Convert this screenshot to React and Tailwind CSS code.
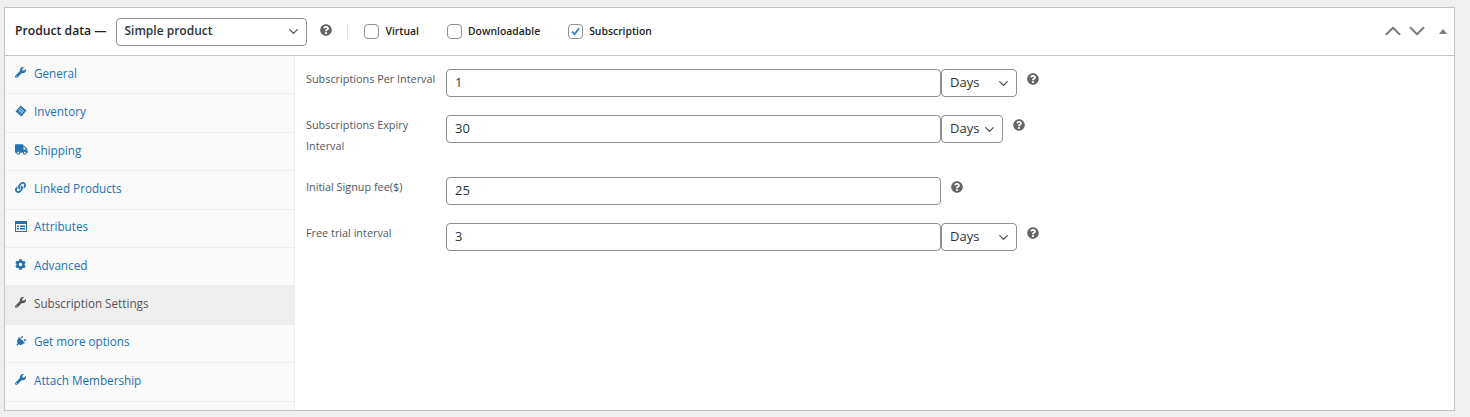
import React from "react";
import { FaCog, FaLink, FaPlug, FaQuestionCircle, FaTruck, FaWrench } from "react-icons/fa";
import { LuChevronDown, LuChevronUp } from "react-icons/lu";

const InventoryIcon = () => (
  <svg viewBox="0 0 12 12" className="w-[12px] h-[12px]" fill="currentColor">
    <path d="M5.5 0.5 L11.5 5.5 L6.5 11.5 L0.5 6.5 Z" />
    <path d="M3.2 4.2 L8 8.2 M4.6 2.8 L9.4 6.8 M3.6 7.6 L6.6 3.8 M5.4 9 L8.4 5.2" stroke="#dbe7f3" strokeWidth="0.7" fill="none" />
  </svg>
);

const AttributesIcon = () => (
  <svg viewBox="0 0 12 11" className="w-[12px] h-[11px]" fill="currentColor">
    <path d="M0.5 0 H11.5 A0.5 0.5 0 0 1 12 0.5 V10.5 A0.5 0.5 0 0 1 11.5 11 H0.5 A0.5 0.5 0 0 1 0 10.5 V0.5 A0.5 0.5 0 0 1 0.5 0 Z M1 3 V10 H11 V3 Z" fillRule="evenodd" />
    <path d="M2 4.5 H4 V6 H2 Z M5 4.5 H10 V6 H5 Z M2 7 H4 V8.5 H2 Z M5 7 H10 V8.5 H5 Z" />
  </svg>
);

const tabs = [
  { label: "General", icon: <FaWrench size={11} /> },
  { label: "Inventory", icon: <InventoryIcon /> },
  { label: "Shipping", icon: <FaTruck size={13} /> },
  { label: "Linked Products", icon: <FaLink size={11} /> },
  { label: "Attributes", icon: <AttributesIcon /> },
  { label: "Advanced", icon: <FaCog size={11} /> },
  { label: "Subscription Settings", icon: <FaWrench size={11} />, active: true },
  { label: "Get more options", icon: <FaPlug size={11} className="rotate-45" /> },
  { label: "Attach Membership", icon: <FaWrench size={11} /> },
];

const Help = () => <FaQuestionCircle size={12} className="text-[#666]" />;

const Select = ({ className, children }) => (
  <div className={`h-[28px] flex items-center justify-between border border-[#8c8f94] rounded bg-white text-[#2c3338] ${className}`}>
    <span className="pb-[1px]">{children}</span>
    <LuChevronDown size={15} strokeWidth={2.2} className="text-[#50575e] shrink-0" />
  </div>
);

const Check = ({ label, checked }) => (
  <div className="flex items-center gap-[6px]">
    <div className="w-[15px] h-[15px] border border-[#8c8f94] rounded-[4px] bg-white flex items-center justify-center">
      {checked && (
        <svg viewBox="0 0 12 12" className="w-[11px] h-[11px]">
          <path d="M2 6.2 L5 9 L10 2.5" stroke="#3582c4" strokeWidth="2" fill="none" />
        </svg>
      )}
    </div>
    <span className="text-[10.4px] font-semibold text-[#1d2327]">{label}</span>
  </div>
);

const FormRow = ({ label, value, unit, narrow, className }) => (
  <div className={`flex items-start ${className}`}>
    <label className="w-[140px] shrink-0 -mt-[1px] text-[10.85px] leading-[21px] text-[#50575e]">{label}</label>
    <div className="w-[495px] h-[28px] flex items-center px-[8px] pb-[1px] border border-[#8c8f94] rounded bg-white text-[13px] text-[#2c3338]">
      {value}
    </div>
    {unit && (
      <Select className={`text-[13px] pl-[8px] pr-[5px] ${narrow ? "w-[62px]" : "w-[76px]"}`}>{unit}</Select>
    )}
    <div className="mt-[4px] ml-[10px]">
      <Help />
    </div>
  </div>
);

export default function App() {
  return (
    <div className="h-[417px] bg-[#f0f0f1] pt-[7px] pl-[4px] pr-[15px] font-['Open_Sans',sans-serif]">
      <div className="h-[404px] border border-[#c3c4c7] bg-white flex flex-col overflow-hidden">
        <div className="h-[48px] shrink-0 border-b border-[#c3c4c7] flex items-center pl-[10px] pr-[3px]">
          <span className="text-[12.2px] font-semibold text-[#1d2327]">Product data —</span>
          <Select className="w-[191px] ml-[10px] pl-[7px] pr-[5px] text-[12px] font-semibold">Simple product</Select>
          <div className="ml-[13px] -mt-[3px]">
            <Help />
          </div>
          <div className="w-px h-[15px] bg-[#e0e0e0] ml-[15px] mr-[16px]" />
          <div className="flex items-center gap-[28px]">
            <Check label="Virtual" />
            <Check label="Downloadable" />
            <Check label="Subscription" checked />
          </div>
          <div className="ml-auto flex items-center text-[#787c82]">
            <LuChevronUp size={26} strokeWidth={1.8} className="-mr-[2px] -mt-[1px]" />
            <LuChevronDown size={26} strokeWidth={1.8} className="-mt-[1px]" />
            <div className="ml-[9px] mr-[4px] w-0 h-0 border-x-[4px] border-x-transparent border-b-[5px] border-b-[#787c82]" />
          </div>
        </div>
        <div className="flex flex-1 min-h-0">
          <div className="w-[290px] shrink-0 bg-[#fafafa] border-r border-[#eeeeee]">
            {tabs.map((tab) => (
              <div
                key={tab.label}
                className={`h-[38.4px] flex items-center pb-[2.4px] pl-[10px] border-b border-[#eeeeee] text-[11.7px] ${
                  tab.active ? "bg-[#eeeeee] text-[#555]" : "text-[#2271b1]"
                }`}
              >
                <span className="w-[19px] flex -mt-[2px]">{tab.icon}</span>
                {tab.label}
              </div>
            ))}
          </div>
          <div className="flex-1 pl-[11px] pt-[13px] flex flex-col">
            <FormRow label="Subscriptions Per Interval" value="1" unit="Days" className="mb-[18px]" />
            <FormRow label={<>Subscriptions Expiry<br />Interval</>} value="30" unit="Days" narrow className="h-[44px] mb-[18px]" />
            <FormRow label="Initial Signup fee($)" value="25" className="mb-[18px]" />
            <FormRow label="Free trial interval" value="3" unit="Days" />
          </div>
        </div>
      </div>
    </div>
  );
}
